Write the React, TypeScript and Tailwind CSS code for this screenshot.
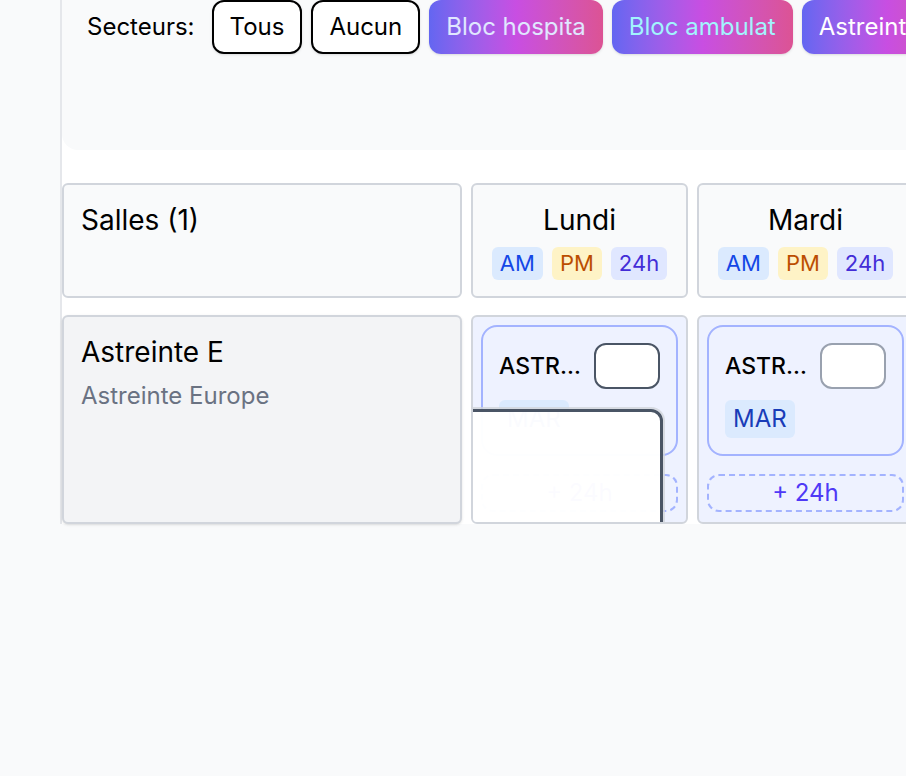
import React from "react";

const sectors = [
  { label: "Bloc hospitalisation", text: "text-indigo-100" },
  { label: "Bloc ambulatoire", text: "text-cyan-200" },
  { label: "Astreinte Europe", text: "text-white" },
];

const days = [
  { name: "Lundi", overlay: true, border: "border-gray-600" },
  { name: "Mardi", overlay: false, border: "border-gray-400" },
  { name: "Mercredi", overlay: false, border: "border-gray-400" },
];

function Badges() {
  return (
    <div className="mt-[9px] flex justify-center gap-[9px] text-[22px] leading-[33px]">
      <span className="rounded-md bg-blue-100 px-[8px] text-blue-700">AM</span>
      <span className="rounded-md bg-amber-100 px-[8px] text-amber-700">PM</span>
      <span className="rounded-md bg-indigo-100 px-[8px] text-indigo-700">24h</span>
    </div>
  );
}

function DayCell({ overlay, border }: { overlay: boolean; border: string }) {
  return (
    <div className="relative flex h-[209px] flex-col gap-[18px] overflow-hidden rounded-md border-2 border-gray-300 bg-indigo-50 p-[8px]">
      <div className="rounded-2xl border-2 border-indigo-300 bg-indigo-50 p-[16px]">
        <div className="flex items-center gap-[8px]">
          <span className="min-w-0 flex-1 truncate text-[23px] font-medium text-black">
            ASTREINTE EUROPE
          </span>
          <div className={`h-[46px] w-[66px] shrink-0 rounded-xl border-2 bg-white ${border}`} />
        </div>
        <div className="mt-[11px] flex">
          <span className="rounded-md bg-blue-100 px-[8px] text-[24px] leading-[38px] text-blue-800">
            MAR
          </span>
        </div>
      </div>
      <button className="h-[38px] rounded-xl border-2 border-dashed border-indigo-300 text-[24px] leading-[34px] text-indigo-600">
        + 24h
      </button>
      {overlay && (
        // drag preview sitting over the cell
        <div className="absolute left-[-100px] top-[92px] h-[200px] w-[290px] rounded-xl border-[3px] border-gray-600 bg-white/[0.98] shadow-[0_0_0_2px_rgba(209,213,219,0.8)]" />
      )}
    </div>
  );
}

export default function App() {
  return (
    <div className="h-[776px] w-[906px] overflow-hidden bg-gray-50 font-['Inter',sans-serif] text-black">
      <div className="ml-[60px] w-[1200px] border-l-2 border-gray-200 bg-white">
        <div className="h-[150px] rounded-bl-2xl bg-gray-50 pl-[25px]">
          <div className="flex items-center gap-[9px] text-[24px]">
            <span className="mr-[8px]">Secteurs:</span>
            <button className="h-[54px] rounded-xl border-2 border-black bg-white px-[16px] shadow-sm">
              Tous
            </button>
            <button className="h-[54px] rounded-xl border-2 border-black bg-white px-[16px] shadow-sm">
              Aucun
            </button>
            {sectors.map((s) => (
              <button
                key={s.label}
                className={`h-[54px] whitespace-nowrap rounded-xl bg-gradient-to-r from-[#6366f1] via-[#c84ee2] to-[#dc5394] px-[17px] shadow-sm ${s.text}`}
              >
                {s.label.slice(0, 12)}
              </button>
            ))}
          </div>
        </div>

        <div className="mt-[33px] grid grid-cols-[400px_217px_217px_217px] gap-x-[9px] gap-y-[17px]">
          <div className="h-[115px] rounded-md border-2 border-gray-300 bg-gray-50 px-[17px] pt-[17px] text-[28px] leading-[36px]">
            Salles (1)
          </div>
          {days.map((d) => (
            <div
              key={d.name}
              className="h-[115px] rounded-md border-2 border-gray-300 bg-gray-50 pt-[17px] text-center"
            >
              <div className="text-[28px] leading-[36px]">{d.name}</div>
              <Badges />
            </div>
          ))}

          <div className="h-[209px] rounded-md border-2 border-gray-300 bg-gray-100 px-[17px] pt-[17px] shadow-sm">
            <div className="text-[28px] leading-[36px]">Astreinte E</div>
            <div className="mt-[8px] text-[24px] text-gray-500">Astreinte Europe</div>
          </div>
          {days.map((d) => (
            <DayCell key={d.name} overlay={d.overlay} border={d.border} />
          ))}
        </div>
      </div>
    </div>
  );
}
